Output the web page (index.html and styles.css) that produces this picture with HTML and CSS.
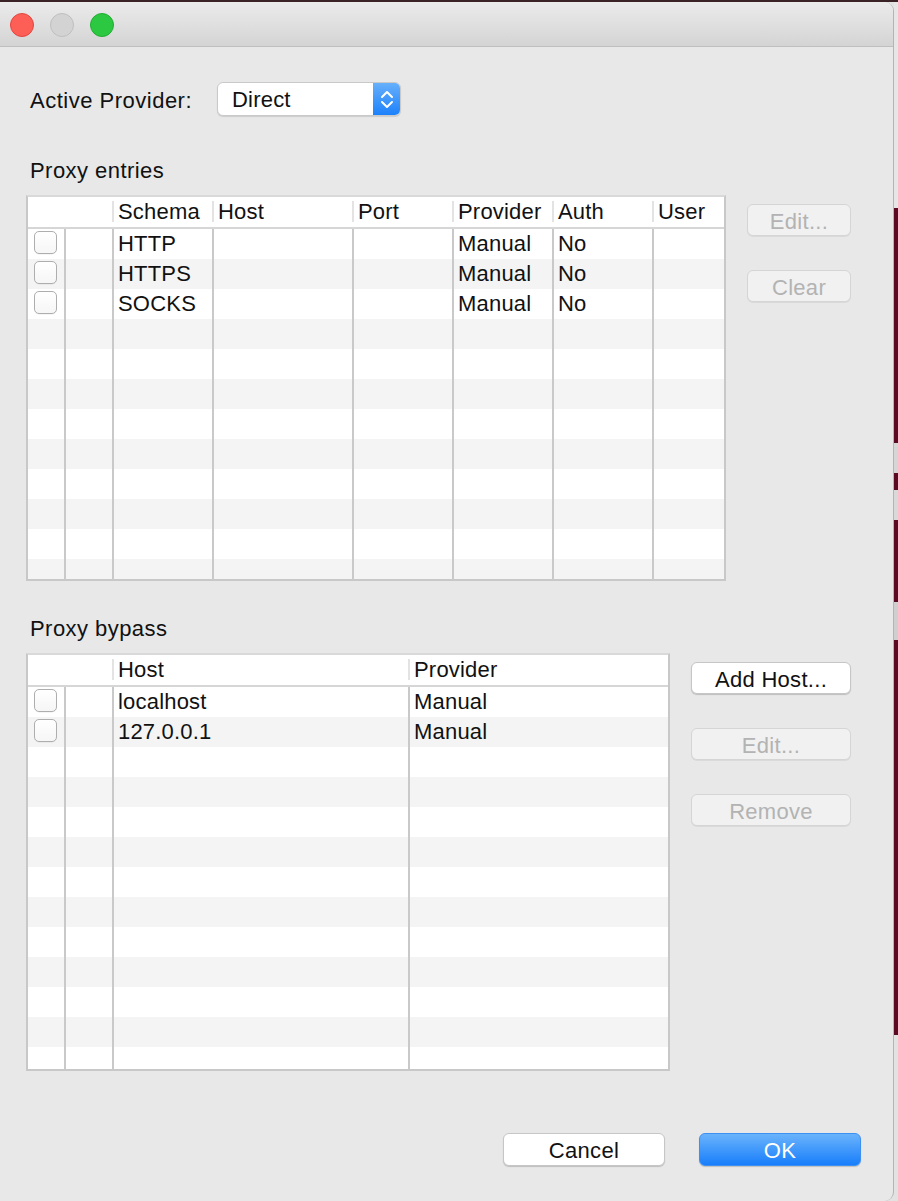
FILE: index.html
```html
<!DOCTYPE html>
<html>
<head>
<meta charset="utf-8">
<link rel="stylesheet" href="styles.css">
</head>
<body>
<div class="topline"></div>
<div class="screen">
  <div class="window">
    <div class="titlebar">
      <span class="light red"></span>
      <span class="light gray"></span>
      <span class="light green"></span>
    </div>
    <div class="content">
      <div class="provider-row">
        <span class="label provider-label">Active Provider:</span>
        <div class="popup">
          <span class="popup-value">Direct</span>
          <span class="popup-arrows">
            <svg width="28" height="34" viewBox="0 0 28 34">
              <path d="M9 15 L14 10 L19 15" fill="none" stroke="#fff" stroke-width="2" stroke-linecap="round" stroke-linejoin="round"/>
              <path d="M9 20 L14 25 L19 20" fill="none" stroke="#fff" stroke-width="2" stroke-linecap="round" stroke-linejoin="round"/>
            </svg>
          </span>
        </div>
      </div>

      <div class="label section-label">Proxy entries</div>
      <div class="section">
        <div class="table entries">
          <div class="thead">
            <span class="hc nosep"></span><span class="hc nosep"></span><span class="hc">Schema</span><span class="hc">Host</span><span class="hc">Port</span><span class="hc">Provider</span><span class="hc">Auth</span><span class="hc">User</span>
          </div>
          <div class="tbody">
            <div class="row"><span class="c"><span class="check"></span></span><span class="c"></span><span class="c">HTTP</span><span class="c"></span><span class="c"></span><span class="c">Manual</span><span class="c">No</span><span class="c"></span></div>
            <div class="row"><span class="c"><span class="check"></span></span><span class="c"></span><span class="c">HTTPS</span><span class="c"></span><span class="c"></span><span class="c">Manual</span><span class="c">No</span><span class="c"></span></div>
            <div class="row"><span class="c"><span class="check"></span></span><span class="c"></span><span class="c">SOCKS</span><span class="c"></span><span class="c"></span><span class="c">Manual</span><span class="c">No</span><span class="c"></span></div>
            <div class="row"><span class="c"></span><span class="c"></span><span class="c"></span><span class="c"></span><span class="c"></span><span class="c"></span><span class="c"></span><span class="c"></span></div>
            <div class="row"><span class="c"></span><span class="c"></span><span class="c"></span><span class="c"></span><span class="c"></span><span class="c"></span><span class="c"></span><span class="c"></span></div>
            <div class="row"><span class="c"></span><span class="c"></span><span class="c"></span><span class="c"></span><span class="c"></span><span class="c"></span><span class="c"></span><span class="c"></span></div>
            <div class="row"><span class="c"></span><span class="c"></span><span class="c"></span><span class="c"></span><span class="c"></span><span class="c"></span><span class="c"></span><span class="c"></span></div>
            <div class="row"><span class="c"></span><span class="c"></span><span class="c"></span><span class="c"></span><span class="c"></span><span class="c"></span><span class="c"></span><span class="c"></span></div>
            <div class="row"><span class="c"></span><span class="c"></span><span class="c"></span><span class="c"></span><span class="c"></span><span class="c"></span><span class="c"></span><span class="c"></span></div>
            <div class="row"><span class="c"></span><span class="c"></span><span class="c"></span><span class="c"></span><span class="c"></span><span class="c"></span><span class="c"></span><span class="c"></span></div>
            <div class="row"><span class="c"></span><span class="c"></span><span class="c"></span><span class="c"></span><span class="c"></span><span class="c"></span><span class="c"></span><span class="c"></span></div>
            <div class="row"><span class="c"></span><span class="c"></span><span class="c"></span><span class="c"></span><span class="c"></span><span class="c"></span><span class="c"></span><span class="c"></span></div>
          </div>
        </div>
        <div class="side-buttons entries-buttons">
          <button class="btn disabled">Edit...</button>
          <button class="btn disabled">Clear</button>
        </div>
      </div>

      <div class="label section-label bypass-label">Proxy bypass</div>
      <div class="section">
        <div class="table bypass">
          <div class="thead">
            <span class="hc nosep"></span><span class="hc nosep"></span><span class="hc">Host</span><span class="hc">Provider</span>
          </div>
          <div class="tbody">
            <div class="row"><span class="c"><span class="check"></span></span><span class="c"></span><span class="c">localhost</span><span class="c">Manual</span></div>
            <div class="row"><span class="c"><span class="check"></span></span><span class="c"></span><span class="c">127.0.0.1</span><span class="c">Manual</span></div>
            <div class="row"><span class="c"></span><span class="c"></span><span class="c"></span><span class="c"></span></div>
            <div class="row"><span class="c"></span><span class="c"></span><span class="c"></span><span class="c"></span></div>
            <div class="row"><span class="c"></span><span class="c"></span><span class="c"></span><span class="c"></span></div>
            <div class="row"><span class="c"></span><span class="c"></span><span class="c"></span><span class="c"></span></div>
            <div class="row"><span class="c"></span><span class="c"></span><span class="c"></span><span class="c"></span></div>
            <div class="row"><span class="c"></span><span class="c"></span><span class="c"></span><span class="c"></span></div>
            <div class="row"><span class="c"></span><span class="c"></span><span class="c"></span><span class="c"></span></div>
            <div class="row"><span class="c"></span><span class="c"></span><span class="c"></span><span class="c"></span></div>
            <div class="row"><span class="c"></span><span class="c"></span><span class="c"></span><span class="c"></span></div>
            <div class="row"><span class="c"></span><span class="c"></span><span class="c"></span><span class="c"></span></div>
            <div class="row"><span class="c"></span><span class="c"></span><span class="c"></span><span class="c"></span></div>
          </div>
        </div>
        <div class="side-buttons bypass-buttons">
          <button class="btn">Add Host...</button>
          <button class="btn disabled">Edit...</button>
          <button class="btn disabled">Remove</button>
        </div>
      </div>

      <div class="footer">
        <button class="btn big">Cancel</button>
        <button class="btn big primary">OK</button>
      </div>
    </div>
  </div>
  <div class="backdrop">
    <span class="seg light-seg s1"></span>
    <span class="seg dark-seg s2"></span>
    <span class="seg light-seg s3"></span>
    <span class="seg dark-seg s4"></span>
    <span class="seg light-seg s5"></span>
    <span class="seg dark-seg s6"></span>
    <span class="seg light-seg s7"></span>
    <span class="seg dark-seg s8"></span>
    <span class="seg light-seg s9"></span>
  </div>
</div>
</body>
</html>
```
FILE: styles.css
```css
* { box-sizing: border-box; }
html, body { margin: 0; padding: 0; }
body {
  width: 898px;
  height: 1201px;
  overflow: hidden;
  background: #e3e3e3;
  font-family: "Liberation Sans", Arial, sans-serif;
  font-size: 22px;
  color: #111;
  letter-spacing: 0.2px;
}
.topline { height: 2px; background: #3a2226; }
.screen { display: flex; height: 1199px; }
.window {
  width: 894px;
  height: 1199px;
  background: #e8e8e8;
  border-right: 1px solid #b4b4b4;
  border-radius: 0 9px 9px 0;
  overflow: hidden;
  display: flex;
  flex-direction: column;
}
.titlebar {
  height: 45px;
  flex: none;
  background: linear-gradient(#ebebeb, #d4d4d4);
  border-bottom: 1px solid #bfbfbf;
  display: flex;
  align-items: flex-start;
  padding: 11px 0 0 10px;
  gap: 16px;
}
.light { width: 24px; height: 24px; border-radius: 50%; display: block; }
.light.red { background: #fd5f57; border: 1px solid #e2463f; }
.light.gray { background: #d3d3d3; border: 1px solid #bfbfbf; }
.light.green { background: #2dc842; border: 1px solid #22ac33; }

.content { padding: 35px 0 0 26px; display: flex; flex-direction: column; flex: 1; }
.label { line-height: 26px; margin-left: 4px; }
.provider-row { display: flex; align-items: flex-start; height: 34px; }
.provider-label { width: 187px; margin-top: 6px; letter-spacing: 0.5px; }
.popup {
  width: 184px;
  height: 34px;
  display: flex;
  background: #fff;
  border: 1px solid #c9c9c9;
  border-radius: 6px;
  box-shadow: 0 1px 1px rgba(0,0,0,0.12);
  overflow: hidden;
}
.popup-value { flex: 1; padding: 1px 0 0 14px; line-height: 32px; }
.popup-arrows {
  width: 28px;
  flex: none;
  margin: -1px -1px -1px 0;
  background: linear-gradient(#69b1fb, #1b80fb);
  display: flex;
}
.section-label { margin-top: 42px; letter-spacing: 0.45px; }
.bypass-label { margin-top: 35px; }
.section { display: flex; align-items: flex-start; margin-top: 11px; }

.table {
  border: 2px solid #c8c8c8;
  border-top-color: #d9d9d9;
  background: #fff;
  flex: none;
}
.entries { width: 700px; }
.bypass { width: 644px; }
.entries .thead, .entries .row { grid-template-columns: 36px 48px 100px 140px 100px 100px 100px 72px; }
.bypass .thead, .bypass .row { grid-template-columns: 36px 48px 296px 260px; }
.thead {
  display: grid;
  height: 32px;
  border-bottom: 2px solid #d6d6d6;
  background: #fff;
}
.hc {
  border-left: 2px solid #e3e3e3;
  margin: 4px 0 5px;
  line-height: 21px;
  padding-left: 4px;
  white-space: nowrap;
}
.hc.nosep { border-left-color: transparent; }
.tbody { overflow: hidden; }
.entries .tbody { height: 350px; }
.bypass .tbody { height: 382px; }
.row { display: grid; height: 30px; background: #fff; }
.row:nth-child(even) { background: #f4f4f4; }
.c {
  border-left: 2px solid #c9c9c9;
  line-height: 28px;
  padding: 1px 0 0 4px;
  white-space: nowrap;
}
.c:first-child { border-left: none; padding: 2px 0 0 6px; }
.check {
  display: block;
  width: 23px;
  height: 23px;
  border: 1px solid #aeaeae;
  border-radius: 5px;
  background: linear-gradient(#ffffff, #f6f6f6);
  box-shadow: 0 0.5px 0.5px rgba(0,0,0,0.08);
}

.side-buttons { display: flex; flex-direction: column; gap: 34px; margin: 9px 0 0 21px; }
.entries-buttons .btn { width: 104px; }
.bypass-buttons .btn { width: 160px; }
.btn {
  font-family: inherit;
  font-size: 22px;
  letter-spacing: 0.3px;
  height: 32px;
  padding: 3px 0 0;
  background: #fff;
  color: #111;
  border: 1px solid #c6c6c6;
  border-radius: 6px;
  box-shadow: 0 1px 1px rgba(0,0,0,0.18);
  line-height: 27px;
}
.btn.disabled {
  background: #f1f1f1;
  color: #b3b3b3;
  border-color: #d5d5d5;
  box-shadow: 0 1px 0.5px rgba(0,0,0,0.06);
}
.footer { display: flex; justify-content: flex-end; gap: 34px; padding-right: 32px; margin-top: 62px; }
.btn.big { width: 162px; height: 33px; line-height: 28px; }
.btn.primary {
  background: linear-gradient(#6ab3fb, #187efb);
  border-color: #3d8ff2;
  color: #fff;
}

.backdrop { flex: 1; display: flex; flex-direction: column; }
.seg { display: block; flex: none; }
.light-seg { background: #e2e2e2; }
.dark-seg { background: #5b0a24; }
.s1 { height: 206px; background: #e6e6e6; }
.s2 { height: 235px; }
.s3 { height: 30px; background: #d6d6d6; }
.s4 { height: 17px; }
.s5 { height: 30px; background: #d9d9d9; }
.s6 { height: 82px; }
.s7 { height: 38px; background: #cfcfcf; }
.s8 { height: 395px; }
.s9 { flex: 1; }
```
